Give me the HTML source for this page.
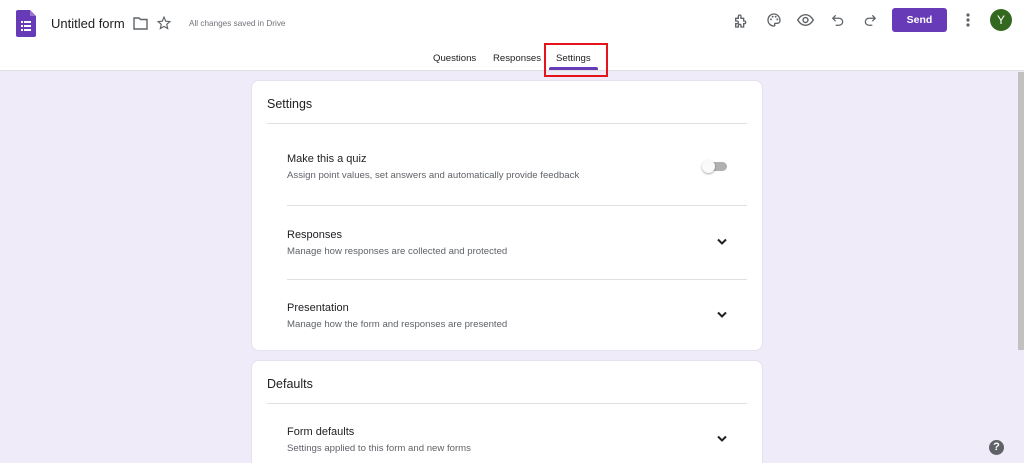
<!DOCTYPE html>
<html><head><style>
*{margin:0;padding:0;box-sizing:border-box}
html,body{width:1024px;height:463px;overflow:hidden}
body{background:#f0ebf8;font-family:"Liberation Sans",Arial,sans-serif;position:relative;color:#202124}
.hdr{position:absolute;left:0;top:0;width:1024px;height:71px;background:#fff;border-bottom:1px solid #e0e0e0}
.a{position:absolute}
.card{position:absolute;left:251px;width:512px;background:#fff;border-radius:8px;border:1px solid #e6e1ee}
.t{position:absolute;left:15px;font-size:12.5px;color:#202124}
.s{position:absolute;left:35px;font-size:9.6px;color:#5f6368}
.h{position:absolute;left:35px;font-size:11px;color:#202124}
.ln{position:absolute;height:1px;background:#e0e0e0;right:15px}
.chev{position:absolute;left:464px}
</style></head><body>
<div class="hdr">
<svg class="a" style="left:16px;top:10px" width="20" height="27" viewBox="0 0 20 27"><path d="M2 0h12l6 6v19a2 2 0 0 1-2 2H2a2 2 0 0 1-2-2V2a2 2 0 0 1 2-2z" fill="#673ab7"/><path d="M14 0v6h6z" fill="#9575cd"/><g fill="#fff"><rect x="5" y="11" width="2" height="2"/><rect x="8" y="11" width="7" height="2"/><rect x="5" y="15" width="2" height="2"/><rect x="8" y="15" width="7" height="2"/><rect x="5" y="19" width="2" height="2"/><rect x="8" y="19" width="7" height="2"/></g></svg>
<div class="a" style="left:51px;top:16px;font-size:13px;color:#202124">Untitled form</div>
<svg class="a" style="left:133px;top:17px" width="15" height="13" viewBox="0 0 15 13"><path d="M1 1h5l1.5 1.5H14v9.5H1z" fill="none" stroke="#5f6368" stroke-width="1.4"/></svg>
<svg class="a" style="left:157px;top:16px" width="14" height="14" viewBox="0 0 24 24"><path d="M12 2l3 7 7 .6-5.3 4.7 1.6 7.2L12 17.8 5.7 21.5l1.6-7.2L2 9.6 9 9z" fill="none" stroke="#5f6368" stroke-width="2"/></svg>
<div class="a" style="left:189px;top:19px;font-size:8.2px;color:#70757a">All changes saved in Drive</div>
<svg class="a" style="left:733px;top:13px" width="16" height="16" viewBox="0 0 24 24"><path d="M4 8h4V5a2 2 0 0 1 4 0v3h4v4h1a2 2 0 0 1 0 4h-1v5h-4v-2a2 2 0 0 0-4 0v2H4v-5h2a2 2 0 0 0 0-4H4z" fill="none" stroke="#5f6368" stroke-width="2"/></svg>
<svg class="a" style="left:766px;top:12px" width="16" height="16" viewBox="0 0 24 24"><path d="M12 3a9 9 0 0 0 0 18c1.5 0 1.5-1 1-2s0-2 1.5-2H17a4 4 0 0 0 4-4c0-5.5-4-10-9-10z" fill="none" stroke="#5f6368" stroke-width="2"/><circle cx="7.5" cy="11" r="1.4" fill="#5f6368"/><circle cx="10" cy="7" r="1.4" fill="#5f6368"/><circle cx="14.5" cy="7" r="1.4" fill="#5f6368"/><circle cx="17" cy="11" r="1.4" fill="#5f6368"/></svg>
<svg class="a" style="left:797px;top:13px" width="17" height="14" viewBox="0 0 24 18"><path d="M1 9c3-5 7-7.5 11-7.5S20 4 23 9c-3 5-7 7.5-11 7.5S4 14 1 9z" fill="none" stroke="#5f6368" stroke-width="2"/><circle cx="12" cy="9" r="3.5" fill="none" stroke="#5f6368" stroke-width="2"/></svg>
<svg class="a" style="left:831px;top:13px" width="14" height="14" viewBox="0 0 24 24"><path d="M4 9h10a6 6 0 0 1 0 12H8M8 4L3 9l5 5" fill="none" stroke="#5f6368" stroke-width="2.2"/></svg>
<svg class="a" style="left:863px;top:13px" width="14" height="14" viewBox="0 0 24 24"><path d="M20 9H10a6 6 0 0 0 0 12h6M16 4l5 5-5 5" fill="none" stroke="#5f6368" stroke-width="2.2"/></svg>
<div class="a" style="left:892px;top:8px;width:55px;height:24px;background:#673ab7;border-radius:3px;color:#fff;font-size:10.5px;font-weight:bold;text-align:center;line-height:24px">Send</div>
<svg class="a" style="left:966px;top:13px" width="4" height="14"><circle cx="2" cy="2" r="1.6" fill="#5f6368"/><circle cx="2" cy="7" r="1.6" fill="#5f6368"/><circle cx="2" cy="12" r="1.6" fill="#5f6368"/></svg>
<div class="a" style="left:990px;top:9px;width:22px;height:22px;border-radius:50%;background:#33691e;color:#fff;font-size:12px;text-align:center;line-height:22px">Y</div>
<div class="a" style="left:433px;top:53px;font-size:9.6px;color:#202124">Questions</div>
<div class="a" style="left:493px;top:53px;font-size:9.6px;color:#202124">Responses</div>
<div class="a" style="left:556px;top:53px;font-size:9.6px;color:#202124">Settings</div>
<div class="a" style="left:549px;top:67px;width:49px;height:3px;background:#673ab7;border-radius:2px 2px 0 0"></div>
<div class="a" style="left:544px;top:43px;width:64px;height:34px;border:2px solid #e5141c"></div>
</div>
<div class="a" style="left:1018px;top:72px;width:6px;height:278px;background:#c1c1c1"></div>
<div class="card" style="top:80px;height:271px">
<div class="t" style="top:16px">Settings</div>
<div class="ln" style="left:15px;top:42px"></div>
<div class="h" style="top:72px">Make this a quiz</div>
<div class="s" style="top:89px">Assign point values, set answers and automatically provide feedback</div>
<div class="a" style="left:454px;top:81px;width:21px;height:9px;border-radius:5px;background:#b0b0b0"></div>
<div class="a" style="left:450px;top:79px;width:13px;height:13px;border-radius:50%;background:#fafafa;box-shadow:0 1px 2px rgba(0,0,0,.35)"></div>
<div class="ln" style="left:35px;top:124px"></div>
<div class="h" style="top:148px">Responses</div>
<div class="s" style="top:165px">Manage how responses are collected and protected</div>
<svg class="chev" style="top:157px" width="12" height="8"><path d="M2 1.5l4 4 4-4" fill="none" stroke="#202124" stroke-width="2"/></svg>
<div class="ln" style="left:35px;top:198px"></div>
<div class="h" style="top:221px">Presentation</div>
<div class="s" style="top:238px">Manage how the form and responses are presented</div>
<svg class="chev" style="top:230px" width="12" height="8"><path d="M2 1.5l4 4 4-4" fill="none" stroke="#202124" stroke-width="2"/></svg>
</div>
<div class="card" style="top:360px;height:120px">
<div class="t" style="top:16px">Defaults</div>
<div class="ln" style="left:15px;top:42px"></div>
<div class="h" style="top:65px">Form defaults</div>
<div class="s" style="top:82px">Settings applied to this form and new forms</div>
<svg class="chev" style="top:74px" width="12" height="8"><path d="M2 1.5l4 4 4-4" fill="none" stroke="#202124" stroke-width="2"/></svg>
</div>
<div class="a" style="left:989px;top:440px;width:15px;height:15px;border-radius:50%;background:#5f6368;color:#fff;font-size:11px;font-weight:bold;text-align:center;line-height:15px">?</div>
</body></html>
